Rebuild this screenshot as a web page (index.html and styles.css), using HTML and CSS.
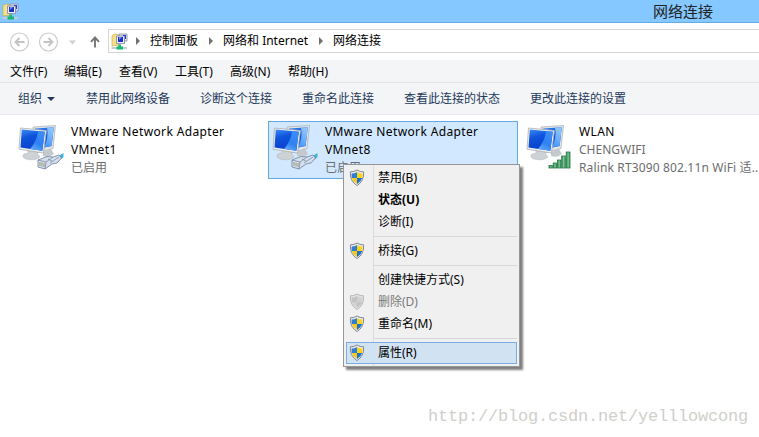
FILE: index.html
```html
<!DOCTYPE html>
<html lang="zh-CN">

<head>
    <meta charset="UTF-8">
    <meta name="viewport" content="width=device-width, initial-scale=1.0">
    <title>网络连接</title>
    <link rel="stylesheet" href="styles.css">
</head>

<body>
    <svg class="defs" width="0" height="0">
        <defs>
            <linearGradient id="screen" x1="0" y1="0" x2="0.3" y2="1">
                <stop offset="0" stop-color="#3f8df5" />
                <stop offset="0.4" stop-color="#0f55dc" />
                <stop offset="1" stop-color="#0a3fcb" />
            </linearGradient>
            <linearGradient id="glow" x1="0" y1="1" x2="0.4" y2="0">
                <stop offset="0" stop-color="#6fb4fc" />
                <stop offset="0.5" stop-color="#2f80f2" />
                <stop offset="1" stop-color="#3b8bf5" />
            </linearGradient>
            <linearGradient id="glow-back" x1="0" y1="1" x2="0.4" y2="0">
                <stop offset="0" stop-color="#3d90f6" />
                <stop offset="1" stop-color="#8cc4fd" />
            </linearGradient>
            <linearGradient id="bars" x1="0" y1="0" x2="1" y2="0">
                <stop offset="0" stop-color="#2c7d4c" />
                <stop offset="0.5" stop-color="#79c795" />
                <stop offset="1" stop-color="#3c9860" />
            </linearGradient>

            <symbol id="folder-net" viewBox="0 0 18 18">
                <path d="M2 3.5 L5 2 L9 3 V13 L2 14 Z" fill="#f7e08b" stroke="#c9a94a" stroke-width=".7" />
                <path d="M9 2 H17 V9 H9 Z" fill="#dfe4ee" stroke="#8490a8" stroke-width=".8" />
                <path d="M6.5 4 H14.5 V11.5 H6.5 Z" fill="#eef1f6" stroke="#7883a5" stroke-width=".8" />
                <path d="M8 5 H13 V10 H8 Z" fill="#1d2fc4" />
                <path d="M13 3 H16 V7 H15 V4 H13 Z" fill="#2c41c9" />
                <path d="M9 5 H12 L9 8 Z" fill="#6e8df2" />
                <path d="M1.5 15 H17 V17 H1.5 Z" fill="#c4ccd0" />
                <path d="M8.5 12.5 H11 V14.5 H13 V17.5 H6.5 V14.5 H8.5 Z" fill="#17b673" />
            </symbol>

            <symbol id="monitors" viewBox="0 0 48 48">
                <path d="M27 28 L35 25 L38 30 Q34 34 27 32 Z" fill="#c5c9cb" />
                <path d="M17 3 L39.5 1.5 L37 24.5 L20 29 Z" fill="#e3e6e8" stroke="#a8adb2" stroke-width=".7" />
                <path d="M19 4.5 L37.8 3.2 L35.6 22 L21 25 Z" fill="url(#screen)" />
                <path d="M31 3.7 L37.8 3.2 L35.6 22 L28 23.6 Q33 13 31 3.7 Z" fill="url(#glow-back)" />
                <path d="M12 26 L21 27 L22 31 Q25 32 23 34 Q18 37 10 35 Q5 33 8 30 L12 29 Z" fill="#cfd2d4" stroke="#aeb2b5" stroke-width=".5" />
                <path d="M4.5 4 L30.5 6.5 L27.5 29 L3 25.2 Z" fill="#eceeef" stroke="#a3a8ad" stroke-width=".7" />
                <path d="M5.8 5.5 L28.8 7.8 L26.3 26.8 L4.5 23.5 Z" fill="url(#screen)" />
                <path d="M22 7.1 L28.8 7.8 L26.3 26.8 L14 25 Q21 17 22 7.1 Z" fill="url(#glow)" />
            </symbol>

            <symbol id="plug" viewBox="0 0 48 48">
                <path d="M37 34 Q42 33 47.5 29 L47.5 33 Q44 37 38 38 Z" fill="#3cb4d6" />
                <path d="M22 36 L31 32.5 L37 33 L43 31 L45.5 34 L41 39 L36 40 L29 45 L22 43 Z" fill="#d5dfec" stroke="#6d809e" stroke-width=".8" />
                <path d="M22 36 L30 38 L29 45 M30 38 L37 33 M34 39 L43 33 M32 35 L36 37" fill="none" stroke="#6d809e" stroke-width=".7" />
                <path d="M24 38 V42 M26 38.5 V42.5 M28 39 V43" stroke="#9c9878" stroke-width="1" />
            </symbol>

            <symbol id="signal" viewBox="0 0 48 48">
                <g fill="url(#bars)" stroke="#277745" stroke-width=".8">
                    <rect x="25" y="41.5" width="3.3" height="2.5" />
                    <rect x="29.2" y="39" width="3.3" height="5" />
                    <rect x="33.4" y="36" width="3.4" height="8" />
                    <rect x="37.7" y="32" width="3.6" height="12" />
                    <rect x="42.2" y="28" width="3.8" height="16" />
                </g>
            </symbol>

            <symbol id="shield" viewBox="0 0 16 18">
                <path d="M8 1 Q11 3 14.6 2.8 Q15.4 12 8 16.6 Q0.6 12 1.4 2.8 Q5 3 8 1 Z" fill="#e8ebee" stroke="#85898e" stroke-width="1" />
                <path d="M8 3 V9 H2.8 Q2.4 6.6 2.7 4.5 Q5.5 4.5 8 3 Z" fill="#2f7fd0" />
                <path d="M8 3 V9 H13.2 Q13.6 6.6 13.3 4.5 Q10.5 4.5 8 3 Z" fill="#fbd21e" />
                <path d="M8 9 V15 Q3.8 12.5 2.8 9 Z" fill="#f9c816" />
                <path d="M8 9 V15 Q12.2 12.5 13.2 9 Z" fill="#1e72cb" />
            </symbol>

            <symbol id="shield-off" viewBox="0 0 16 18">
                <path d="M8 1 Q11 3 14.6 2.8 Q15.4 12 8 16.6 Q0.6 12 1.4 2.8 Q5 3 8 1 Z" fill="#e2e2e2" stroke="#b9b9b9" stroke-width="1" />
                <path d="M8 3 V9 H2.8 Q2.4 6.6 2.7 4.5 Q5.5 4.5 8 3 Z M8 9 V15 Q12.2 12.5 13.2 9 Z" fill="#c3c3c3" />
                <path d="M8 3 V9 H13.2 Q13.6 6.6 13.3 4.5 Q10.5 4.5 8 3 Z M8 9 V15 Q3.8 12.5 2.8 9 Z" fill="#d1d1d1" />
            </symbol>
        </defs>
    </svg>

    <div class="window">
        <header class="titlebar">
            <svg class="app-icon"><use href="#folder-net" /></svg>
            <h1>网络连接</h1>
        </header>

        <nav class="address-row">
            <svg class="nav-buttons" viewBox="0 0 108 36">
                <g fill="none" stroke="#c9c9c9" stroke-width="1.2">
                    <circle cx="19.5" cy="18" r="9" />
                    <circle cx="48.5" cy="18" r="9" />
                </g>
                <g fill="none" stroke="#c4c4c4" stroke-width="1.9">
                    <path d="M24.5 18 H15.5 M19.5 14 L15.5 18 L19.5 22" />
                    <path d="M43.5 18 H52.5 M48.5 14 L52.5 18 L48.5 22" />
                </g>
                <path d="M69 16.5 H76 L72.5 20.5 Z" fill="#cfcfcf" />
                <path d="M95 23.5 V14 M91 17.8 L95 13.5 L99 17.8" fill="none" stroke="#757575" stroke-width="1.9" />
            </svg>
            <div class="address">
                <svg class="app-icon"><use href="#folder-net" /></svg>
                <i class="crumb-arrow"></i>
                <span>控制面板</span>
                <i class="crumb-arrow"></i>
                <span class="crumb-wide">网络和 Internet</span>
                <i class="crumb-arrow"></i>
                <span>网络连接</span>
            </div>
        </nav>

        <nav class="menubar">
            <span>文件(F)</span>
            <span>编辑(E)</span>
            <span>查看(V)</span>
            <span>工具(T)</span>
            <span>高级(N)</span>
            <span>帮助(H)</span>
        </nav>

        <div class="toolbar">
            <span class="organize">组织<i class="down-arrow"></i></span>
            <span>禁用此网络设备</span>
            <span>诊断这个连接</span>
            <span>重命名此连接</span>
            <span>查看此连接的状态</span>
            <span>更改此连接的设置</span>
        </div>

        <main class="connections">
            <div class="connection">
                <svg class="conn-icon" viewBox="0 0 48 48"><use href="#monitors" /><use href="#plug" /></svg>
                <div class="info">
                    <p class="name">VMware Network Adapter VMnet1</p>
                    <p>已启用</p>
                </div>
            </div>
            <div class="connection selected">
                <svg class="conn-icon" viewBox="0 0 48 48"><use href="#monitors" /><use href="#plug" /></svg>
                <div class="info">
                    <p class="name">VMware Network Adapter VMnet8</p>
                    <p>已启用</p>
                </div>
            </div>
            <div class="connection">
                <svg class="conn-icon" viewBox="0 0 48 48"><use href="#monitors" /><use href="#signal" /></svg>
                <div class="info">
                    <p class="name">WLAN</p>
                    <p class="ssid">CHENGWIFI</p>
                    <p class="device">Ralink RT3090 802.11n WiFi 适..</p>
                </div>
            </div>
        </main>

        <ul class="context-menu">
            <li><svg><use href="#shield" /></svg>禁用(B)</li>
            <li class="default">状态(U)</li>
            <li>诊断(I)</li>
            <li class="separator"></li>
            <li><svg><use href="#shield" /></svg>桥接(G)</li>
            <li class="separator"></li>
            <li>创建快捷方式(S)</li>
            <li class="disabled"><svg><use href="#shield-off" /></svg>删除(D)</li>
            <li><svg><use href="#shield" /></svg>重命名(M)</li>
            <li class="separator"></li>
            <li class="active"><svg><use href="#shield" /></svg>属性(R)</li>
        </ul>

        <p class="watermark">http://blog.csdn.net/yelllowcong</p>
    </div>
</body>

</html>
```

FILE: styles.css
```css
* {
    margin: 0;
    padding: 0;
    box-sizing: border-box;
}

body {
    height: 437px;
    overflow: hidden;
    background-color: #fff;
    font-family: "Noto Sans", "Noto Sans CJK SC", sans-serif;
    font-size: 12px;
    color: #000;
}

.defs {
    position: absolute;
}

.window {
    position: relative;
    width: 759px;
    height: 437px;
    overflow: hidden;
    display: flex;
    flex-direction: column;
    white-space: nowrap;
}

.titlebar {
    height: 23px;
    display: flex;
    align-items: center;
    justify-content: space-between;
    padding: 0 46px 0 1px;
    background-color: #85c7ff;
    border-bottom: 1px solid #66aae4;
}

.titlebar h1 {
    font-size: 15px;
    line-height: 22px;
    font-weight: normal;
    color: #222;
}

.app-icon {
    width: 18px;
    height: 18px;
    flex: none;
}

.address-row {
    height: 37px;
    display: flex;
    align-items: center;
}

.nav-buttons {
    width: 108px;
    height: 36px;
    flex: none;
}

.address {
    flex: 1;
    height: 24px;
    margin-bottom: 2px;
    display: flex;
    align-items: center;
    padding-left: 1px;
    border: 1px solid #d5d5d5;
    border-right: none;
    line-height: 22px;
}

.crumb-wide {
    width: 85px;
}

.crumb-arrow {
    margin: 0 10px 0 11px;
    border-left: 4px solid #707070;
    border-top: 4px solid transparent;
    border-bottom: 4px solid transparent;
}

.app-icon + .crumb-arrow {
    margin-left: 8px;
}

.menubar {
    height: 23px;
    display: grid;
    grid-template-columns: 54px 55px 56px 55px 58px auto;
    padding: 1px 0 0 10px;
    line-height: 21px;
    background-color: #f4f5f7;
    border-bottom: 1px solid #e3e5e8;
}

.toolbar {
    height: 32px;
    display: flex;
    gap: 30px;
    padding-left: 18px;
    line-height: 31px;
    color: #1e395b;
    background-color: #f4f5f7;
    border-bottom: 1px solid #e8eaed;
}

.organize {
    display: flex;
    align-items: center;
    width: 38px;
}

.down-arrow {
    flex: none;
    margin-left: 5px;
    border-top: 4px solid #1e395b;
    border-left: 4px solid transparent;
    border-right: 4px solid transparent;
}

.connections {
    display: flex;
    gap: 4px;
    padding: 6px 0 0 14px;
}

.connection {
    width: 250px;
    height: 58px;
    flex: none;
    display: flex;
    padding: 1px 0 0 1px;
    border: 1px solid transparent;
}

.connection.selected {
    background-color: #d1e8ff;
    border-color: #66a7e8;
}

/* the last item runs past the right edge of the window */
.connection:last-child {
    width: 237px;
}

.conn-icon {
    width: 48px;
    height: 48px;
    margin-top: 1px;
    flex: none;
    overflow: visible;
}

.info {
    margin-left: 7px;
    line-height: 18px;
    color: #6d6d6d;
}

.info .name {
    width: 175px;
    white-space: normal;
    letter-spacing: 0.36px;
    color: #000;
}

.info .device {
    letter-spacing: 0.14px;
}

.context-menu {
    position: absolute;
    left: 343px;
    top: 164px;
    width: 177px;
    padding: 2px;
    list-style: none;
    background: linear-gradient(to right, transparent 29px, #dcdcdc 29px, #dcdcdc 30px, transparent 30px) #f0f0f0;
    border: 1px solid #979797;
    box-shadow: 3px 3px 2px rgba(0, 0, 0, 0.5);
}

.context-menu li {
    position: relative;
    height: 22px;
    padding-left: 32px;
    line-height: 22px;
}

.context-menu svg {
    position: absolute;
    left: 3px;
    top: 2px;
    width: 16px;
    height: 18px;
}

.context-menu .separator {
    height: 7px;
    margin-left: 28px;
    padding: 0;
    background: linear-gradient(#d7d7d7, #d7d7d7) 0 3px / 100% 1px no-repeat;
}

.context-menu .default {
    font-weight: bold;
}

.context-menu .disabled {
    color: #7a7a7a;
}

.context-menu .active {
    background-color: #d1e2f2;
    box-shadow: inset 0 0 0 1px #78aee5;
}

.watermark {
    position: absolute;
    left: 428px;
    top: 404px;
    font-family: "Liberation Mono", monospace;
    font-size: 17px;
    line-height: 26px;
    letter-spacing: -0.2px;
    color: #cfcfcb;
}
```
